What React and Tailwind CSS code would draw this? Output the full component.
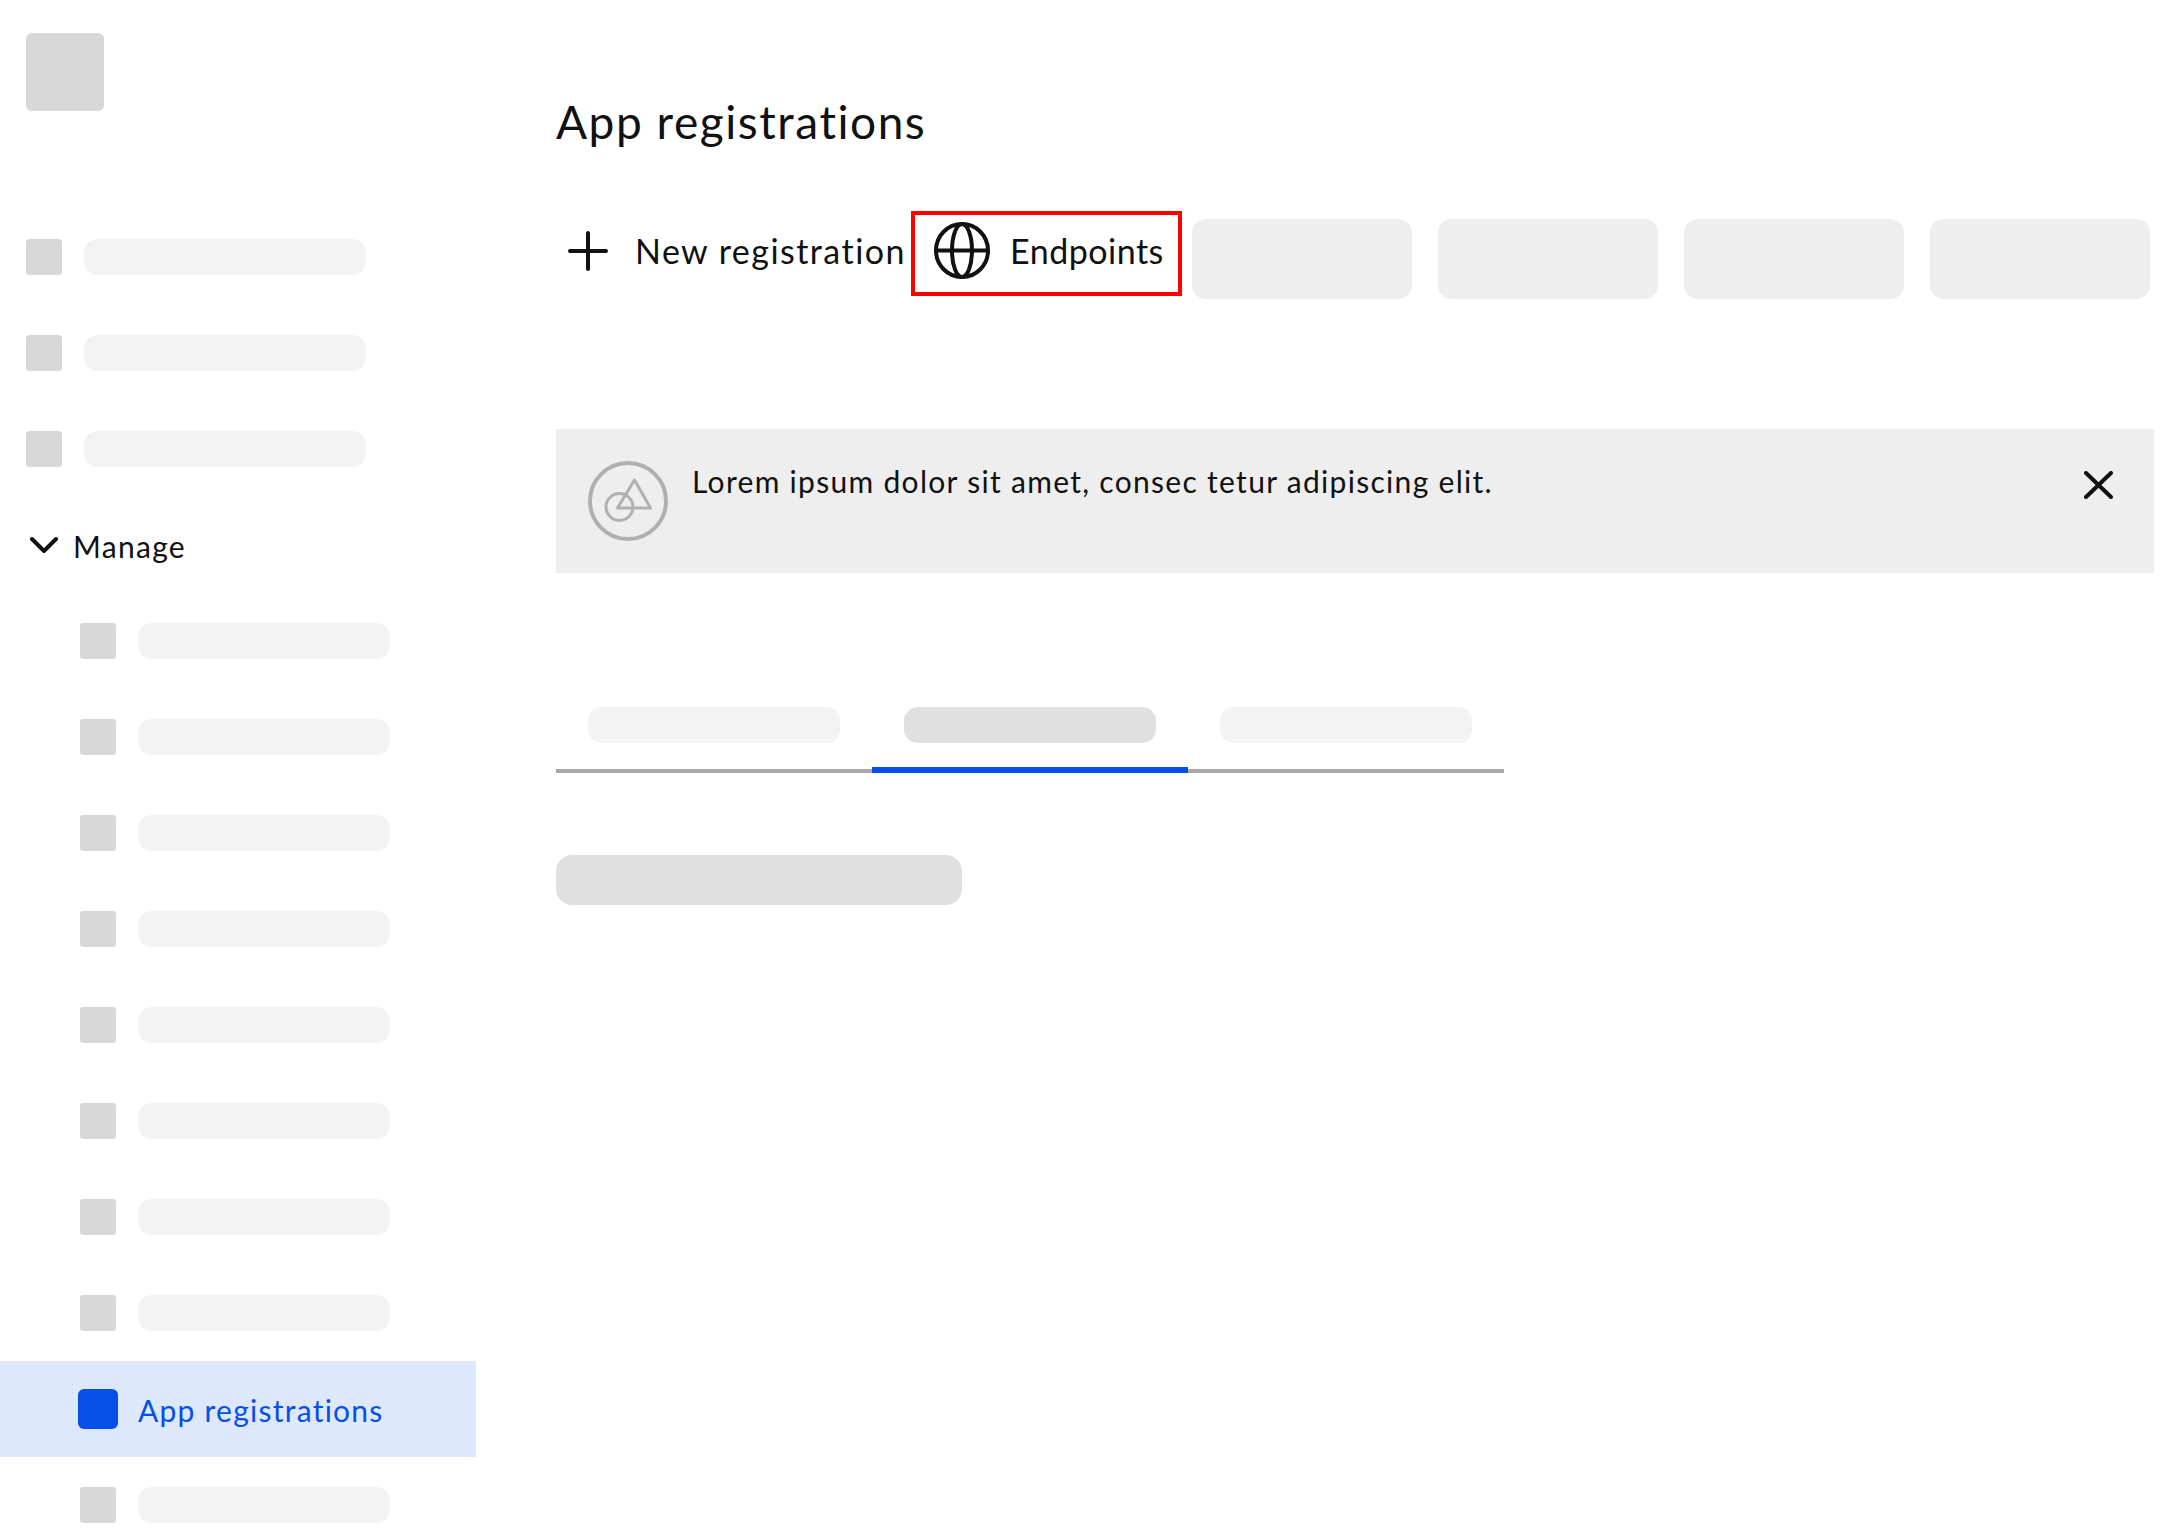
const fontFamily = "font-['Lato',sans-serif]";

const NavRow = ({ nested }) => (
  <div className={`flex h-24 items-center ${nested ? "pl-20" : "pl-[26px]"}`}>
    <div className="mr-[22px] h-9 w-9 rounded-[3px] bg-[#d8d8d8]" />
    <div className={`h-9 rounded-[14px] bg-[#f3f3f3] ${nested ? "w-[252px]" : "w-[282px]"}`} />
  </div>
);

const Sidebar = () => (
  <aside className="w-[476px] shrink-0 pt-[33px]">
    <div className="ml-[26px] h-[78px] w-[78px] rounded-[6px] bg-[#d8d8d8]" />
    <div className="mt-[98px]">
      <NavRow />
      <NavRow />
      <NavRow />
      <div className="flex h-24 items-center pl-[30px]">
        <svg width="28" height="18" viewBox="0 0 28 18" fill="none" stroke="#111" strokeWidth="4" strokeLinecap="round" strokeLinejoin="round">
          <path d="M2 3l12 12L26 3" />
        </svg>
        <span className="mt-[2px] ml-[15px] whitespace-nowrap text-[30px] tracking-[1.3px] text-[#111]">Manage</span>
      </div>
      {Array.from({ length: 8 }).map((_, i) => (
        <NavRow key={i} nested />
      ))}
      <div className="flex h-24 items-center bg-[#dee8fd] pl-[78px]">
        <div className="h-10 w-10 rounded-[6px] bg-[#064fe8]" />
        <span className="mt-[2px] ml-5 whitespace-nowrap text-[30px] tracking-[1.25px] text-[#064fe8]">App registrations</span>
      </div>
      <NavRow nested />
    </div>
  </aside>
);

const Toolbar = () => (
  <div className="mt-[53px] flex items-start">
    <div className="mt-[14px] ml-3 flex w-[343px] items-center">
      <svg width="40" height="40" viewBox="0 0 40 40" fill="none" stroke="#111" strokeWidth="4" strokeLinecap="round">
        <path d="M20 2v36M2 20h36" />
      </svg>
      <span className="ml-[27px] whitespace-nowrap text-[34px] tracking-[1.45px] text-[#111]">New registration</span>
    </div>
    <div className="flex h-[85px] w-[271px] items-center border-4 border-[#fe0000] pb-[6px] pl-[19px]">
      <svg width="56" height="57" viewBox="0 0 56 57" fill="none" stroke="#111" strokeWidth="4">
        <ellipse cx="28" cy="28.500" rx="26" ry="26.500" />
        <ellipse cx="28" cy="28.500" rx="10" ry="26.500" />
        <path d="M2 28.500h52" />
      </svg>
      <span className="ml-5 whitespace-nowrap text-[34px] tracking-[0.5px] text-[#111]">Endpoints</span>
    </div>
    <div className="mt-2 ml-2.5 flex gap-[26px]">
      {Array.from({ length: 4 }).map((_, i) => (
        <div key={i} className="h-20 w-[220px] rounded-[14px] bg-[#eeeeee]" />
      ))}
    </div>
  </div>
);

const Banner = () => (
  <div className="mt-[130px] flex h-36 items-start bg-[#eeeeee] pt-8 pl-8 pr-[41px]">
    <svg width="80" height="80" viewBox="0 0 80 80" fill="none" stroke="#b0b0b0" strokeWidth="4" className="shrink-0">
      <circle cx="40" cy="40" r="38" />
      <path d="M46.500 19L29.500 47h33z" strokeWidth="3" strokeLinejoin="round" />
      <circle cx="31.500" cy="46" r="13.500" strokeWidth="3" />
    </svg>
    <span className="ml-6 whitespace-nowrap text-[30px] leading-[40px] tracking-[1.3px] text-[#111]">
      Lorem ipsum dolor sit amet, consec tetur adipiscing elit.
    </span>
    <svg width="29" height="28" viewBox="0 0 29 28" fill="none" stroke="#111" strokeWidth="4" strokeLinecap="round" className="mt-[10px] ml-auto shrink-0">
      <path d="M2 2l25 24M27 2L2 26" />
    </svg>
  </div>
);

const Tabs = () => (
  <div className="mt-[134px] flex w-[948px] items-start border-b-4 border-[#a8a8a8]">
    <div className="w-[316px] px-8 pb-[26px]">
      <div className="h-9 rounded-[14px] bg-[#f3f3f3]" />
    </div>
    <div className="-mb-1 w-[316px] border-b-[6px] border-[#064fe8] px-8 pb-6">
      <div className="h-9 rounded-[14px] bg-[#e0e0e0]" />
    </div>
    <div className="w-[316px] px-8 pb-[26px]">
      <div className="h-9 rounded-[14px] bg-[#f3f3f3]" />
    </div>
  </div>
);

export default function App() {
  return (
    <div className={`flex h-[1532px] overflow-hidden bg-white ${fontFamily}`}>
      <Sidebar />
      <main className="flex-1 pt-[86px] pl-20 pr-4">
        <h1 className="text-[46px] leading-[72px] font-normal tracking-[1.55px] text-[#111]">App registrations</h1>
        <Toolbar />
        <Banner />
        <Tabs />
        <div className="mt-[82px] h-[50px] w-[406px] rounded-[16px] bg-[#e0e0e0]" />
      </main>
    </div>
  );
}
